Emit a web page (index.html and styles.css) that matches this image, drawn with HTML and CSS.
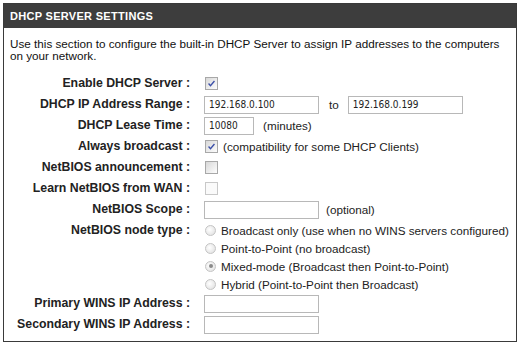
FILE: index.html
```html
<!DOCTYPE html>
<html lang="en">
<head>
  <meta charset="UTF-8" />
  <title>DHCP Server Settings</title>
  <link rel="stylesheet" href="styles.css">
</head>
<body>

  <div class="box">
    <h2 class="box-title">DHCP SERVER SETTINGS</h2>
    <p class="intro">Use this section to configure the built-in DHCP Server to assign IP addresses to the computers on your network.</p>

    <div class="form">
      <label class="lbl">Enable DHCP Server :</label>
      <div class="field"><span class="chk on"><svg viewBox="0 0 13 13"><path d="M3 6.5 L5.3 9 L10 3.5" /></svg></span></div>

      <label class="lbl">DHCP IP Address Range :</label>
      <div class="field">
        <input class="txt" type="text" value="192.168.0.100">
        <span class="to">to</span>
        <input class="txt" type="text" value="192.168.0.199">
      </div>

      <label class="lbl">DHCP Lease Time :</label>
      <div class="field"><input class="txt short" type="text" value="10080"><span class="note">(minutes)</span></div>

      <label class="lbl">Always broadcast :</label>
      <div class="field"><span class="chk on"><svg viewBox="0 0 13 13"><path d="M3 6.5 L5.3 9 L10 3.5" /></svg></span><span class="hint">(compatibility for some DHCP Clients)</span></div>

      <label class="lbl">NetBIOS announcement :</label>
      <div class="field"><span class="chk"></span></div>

      <label class="lbl">Learn NetBIOS from WAN :</label>
      <div class="field"><span class="chk off"></span></div>

      <label class="lbl">NetBIOS Scope :</label>
      <div class="field"><input class="txt" type="text"><span class="opt">(optional)</span></div>

      <label class="lbl">NetBIOS node type :</label>
      <div class="field radios">
        <div class="radio-row"><span class="rad"></span>Broadcast only (use when no WINS servers configured)</div>
        <div class="radio-row"><span class="rad"></span>Point-to-Point (no broadcast)</div>
        <div class="radio-row"><span class="rad on"></span>Mixed-mode (Broadcast then Point-to-Point)</div>
        <div class="radio-row"><span class="rad"></span>Hybrid (Point-to-Point then Broadcast)</div>
      </div>

      <label class="lbl">Primary WINS IP Address :</label>
      <div class="field"><input class="txt" type="text"></div>

      <label class="lbl">Secondary WINS IP Address :</label>
      <div class="field"><input class="txt" type="text"></div>
    </div>
  </div>

</body>
</html>
```

FILE: styles.css
```css
body {
  margin: 0;
  background: #fff;
  font-family: "Liberation Sans", Arial, sans-serif;
  font-size: 11.7px;
  color: #111;
}
.box {
  margin: 3px 0 0 3px;
  width: 514px;
  height: 339px;
  border: 1px solid #3a3a3a;
  box-sizing: border-box;
}
.box-title {
  margin: 0;
  height: 24px;
  line-height: 24px;
  padding-left: 6px;
  background: #3d3d3d;
  color: #fff;
  font-size: 11px;
  font-weight: bold;
  letter-spacing: 0.3px;
}
.intro {
  margin: 10px 6px 0 6px;
  line-height: 12px;
}

.form {
  display: grid;
  grid-template-columns: 186px 1fr;
  column-gap: 14px;
  margin-top: 11px;
}
.lbl {
  text-align: right;
  font-weight: bold;
  font-size: 12.3px;
  height: 21px;
  line-height: 21px;
  color: #222;
}
.field {
  display: flex;
  align-items: center;
  height: 21px;
  color: #222;
}

/* text boxes */
.txt {
  width: 115px;
  height: 18px;
  box-sizing: border-box;
  margin: 0;
  padding: 0 4px;
  border: 1px solid #b8b8b8;
  font-family: "DejaVu Sans Condensed", "Liberation Sans", sans-serif;
  font-size: 10px;
  color: #222;
}
.txt.short {
  width: 50px;
}
.to {
  margin: 0 9px 0 10px;
}
.note {
  margin-left: 9px;
}
.opt {
  margin-left: 7px;
}
.hint {
  margin-left: 5px;
}

/* checkboxes */
.chk {
  display: inline-block;
  width: 11px;
  height: 11px;
  margin-left: 1px;
  border: 1px solid #a8a8a8;
  background: linear-gradient(135deg, #d8d8d8, #fdfdfd);
}
.chk.off {
  border-color: #c8c8c8;
  background: #fafafa;
}
.chk svg {
  display: block;
  width: 11px;
  height: 11px;
}
.chk path {
  fill: none;
  stroke: #3b4fa8;
  stroke-width: 1.6;
}

/* radios */
.radios {
  display: block;
  height: auto;
  padding-top: 1px;
}
.radio-row {
  display: flex;
  align-items: center;
  height: 18px;
}
.rad {
  display: inline-block;
  width: 11px;
  height: 11px;
  margin: 0 5px 0 1px;
  border-radius: 50%;
  border: 1px solid #c4c4c4;
  background: radial-gradient(circle at 40% 40%, #fff, #dcdcdc);
  box-sizing: border-box;
  position: relative;
}
.rad.on::after {
  content: "";
  position: absolute;
  left: 2.5px;
  top: 2.5px;
  width: 4px;
  height: 4px;
  border-radius: 50%;
  background: #8a8a8a;
}
```
